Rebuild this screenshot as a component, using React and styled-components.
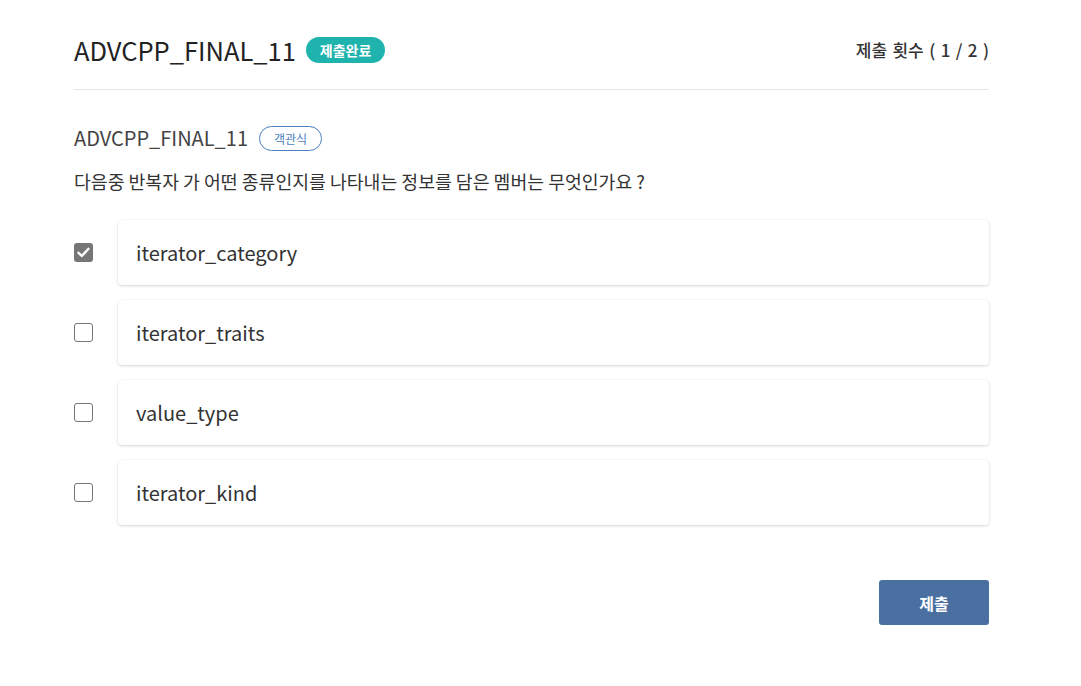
import React, { useState } from "react";
import styled, { createGlobalStyle } from "styled-components";

const Global = createGlobalStyle`
  html, body { margin: 0; padding: 0; background: #fff; }
  body { font-family: "Noto Sans CJK KR", "Noto Sans", sans-serif; color: #333; }
  * { box-sizing: border-box; }
`;

const Page = styled.div`
  width: 915px;
  margin-left: 74px;
  padding-top: 20px;
`;

const Header = styled.header`
  display: flex;
  align-items: center;
  justify-content: space-between;
  height: 70px;
  padding-bottom: 10px;
  border-bottom: 1px solid #e6e6e6;
`;

const TitleWrap = styled.div`
  display: flex;
  align-items: center;
  gap: 10px;
`;

const Title = styled.h1`
  margin: 0;
  font-size: 25.5px;
  font-weight: 400;
  color: #222;
  line-height: 1;
`;

const DoneBadge = styled.span`
  display: inline-flex;
  align-items: center;
  justify-content: center;
  height: 26px;
  padding: 0 14px;
  border-radius: 13px;
  background: #1fb3ad;
  color: #fff;
  font-size: 14px;
  font-weight: 700;
`;

const Count = styled.div`
  font-size: 17px;
  font-weight: 500;
  color: #333;
  word-spacing: 1.6px;
`;

const Section = styled.section`
  padding-top: 34px;
`;

const SubTitleRow = styled.div`
  display: flex;
  align-items: center;
  gap: 11px;
  height: 28px;
`;

const SubTitle = styled.h2`
  margin: 0;
  font-size: 20px;
  font-weight: 400;
  color: #444;
  line-height: 1;
`;

const TypeBadge = styled.span`
  display: inline-flex;
  align-items: center;
  justify-content: center;
  height: 25px;
  padding: 0 14px;
  border-radius: 13px;
  border: 1px solid #4a7fc0;
  color: #4a7fc0;
  font-size: 12px;
`;

const Question = styled.p`
  margin: 16px 0 0;
  font-size: 18.3px;
  color: #333;
  line-height: 27px;
`;

const Options = styled.div`
  display: flex;
  flex-direction: column;
  gap: 15px;
  margin-top: 25px;
`;

const OptionRow = styled.label`
  display: flex;
  align-items: center;
  cursor: pointer;
`;

const Box = styled.span`
  width: 19px;
  height: 19px;
  flex: 0 0 19px;
  margin-right: 25px;
  border-radius: 3px;
  border: ${(p) => (p.$checked ? "none" : "1.5px solid #767676")};
  background: ${(p) => (p.$checked ? "#767676" : "#fff")};
  display: flex;
  align-items: center;
  justify-content: center;
`;

const Card = styled.div`
  flex: 1;
  height: 65px;
  display: flex;
  align-items: center;
  padding-left: 18px;
  border-radius: 4px;
  background: #fff;
  box-shadow: 0 1px 3px rgba(0, 0, 0, 0.16), 0 0 1px rgba(0, 0, 0, 0.08);
  font-size: 20px;
  color: #333;
`;

const Footer = styled.div`
  display: flex;
  justify-content: flex-end;
  margin-top: 55px;
`;

const Submit = styled.button`
  width: 110px;
  height: 45px;
  border: none;
  border-radius: 3px;
  background: #4a6fa1;
  color: #fff;
  font-family: inherit;
  font-size: 16px;
  font-weight: 700;
  cursor: pointer;
`;

const options = ["iterator_category", "iterator_traits", "value_type", "iterator_kind"];

export default function App() {
  const [sel, setSel] = useState(0);
  return (
    <>
      <Global />
      <Page>
        <Header>
          <TitleWrap>
            <Title>ADVCPP_FINAL_11</Title>
            <DoneBadge>제출완료</DoneBadge>
          </TitleWrap>
          <Count>제출 횟수 ( 1 / 2 )</Count>
        </Header>
        <Section>
          <SubTitleRow>
            <SubTitle>ADVCPP_FINAL_11</SubTitle>
            <TypeBadge>객관식</TypeBadge>
          </SubTitleRow>
          <Question>다음중 반복자 가 어떤 종류인지를 나타내는 정보를 담은 멤버는 무엇인가요 ?</Question>
          <Options>
            {options.map((o, i) => (
              <OptionRow key={o} onClick={() => setSel(i)}>
                <Box $checked={sel === i}>
                  {sel === i && (
                    <svg width="13" height="11" viewBox="0 0 13 11">
                      <path d="M1.5 5.8 L4.8 9 L11.5 1.8" fill="none" stroke="#fff" strokeWidth="2.4" strokeLinecap="round" strokeLinejoin="round" />
                    </svg>
                  )}
                </Box>
                <Card>{o}</Card>
              </OptionRow>
            ))}
          </Options>
          <Footer>
            <Submit>제출</Submit>
          </Footer>
        </Section>
      </Page>
    </>
  );
}
